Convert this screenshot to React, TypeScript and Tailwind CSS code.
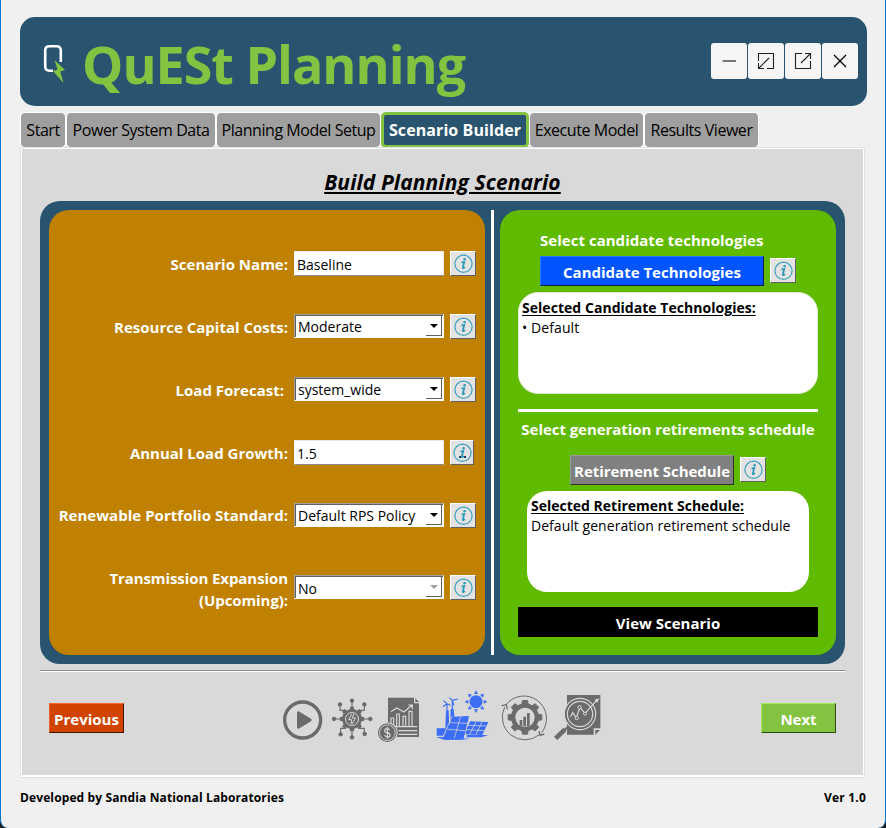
import type { ReactNode } from "react";

function gearPath(cx: number, cy: number, outer: number, inner: number, teeth: number) {
  const pts: string[] = [];
  const step = (Math.PI * 2) / teeth;
  for (let i = 0; i < teeth; i++) {
    const a = i * step - Math.PI / 2;
    const corners: [number, number][] = [
      [inner, -0.29],
      [outer, -0.19],
      [outer, 0.19],
      [inner, 0.29],
    ];
    corners.forEach(([r, o]) => {
      pts.push(`${(cx + r * Math.cos(a + o * step)).toFixed(1)} ${(cy + r * Math.sin(a + o * step)).toFixed(1)}`);
    });
  }
  return `M${pts.join("L")}Z`;
}

function InfoIcon() {
  return (
    <svg width="20" height="20" viewBox="0 0 20 20">
      <circle cx="10.500" cy="9.800" r="8.600" fill="none" stroke="#3aa0bd" strokeWidth="1.200" />
      <circle cx="11.600" cy="5.300" r="1.300" fill="#2f9ab8" />
      <path d="M8.500 8.400L11.200 8L9.800 13.600Q9.700 14.800 12 13.100" fill="none" stroke="#2f9ab8" strokeWidth="1.800" />
    </svg>
  );
}

function InfoButton({ narrow = false }: { narrow?: boolean }) {
  return (
    <button
      className={`relative flex h-[25px] shrink-0 items-center justify-center border border-t-white border-l-white border-r-[#606060] border-b-[#606060] bg-[#e3e3e3] ${narrow ? "w-6" : "w-[26px]"}`}
    >
      <InfoIcon />
      {narrow && <span className="absolute bottom-[6px] left-[8px] w-[7px] border-b-2 border-dotted border-[#1d3f63]" />}
    </button>
  );
}

function TextField({ value }: { value: string }) {
  return (
    <div className="flex h-[25px] w-[150px] items-center border border-t-[#e8e8e8] border-r-[#e8e8e8] border-l-white border-b-[#8a8a8a] bg-white pt-px pl-0.5 text-[14px] text-black">
      {value}
    </div>
  );
}

function SelectField({ value, disabled = false }: { value: string; disabled?: boolean }) {
  return (
    <div className="flex h-6 w-[150px] border border-t-[#a0a0a0] border-l-[#a0a0a0] border-r-white border-b-white bg-white">
      <div className="flex flex-1 items-center border-t border-l border-[#606060] pr-px pl-0.5 text-[14px] text-black">
        <span className={`flex-1 whitespace-nowrap ${disabled ? "pt-0.5" : ""}`}>{value}</span>
        <span className="mt-auto mb-px flex h-[20px] w-4 items-center justify-center border-r border-b border-[#606060] pt-px">
          <svg width="8" height="4" viewBox="0 0 8 4">
            <path d="M0 0H8L4 4Z" fill={disabled ? "#a0a0a0" : "#000"} />
          </svg>
        </span>
      </div>
    </div>
  );
}

function FormRow({ label, children, narrow }: { label: ReactNode; children: ReactNode; narrow?: boolean }) {
  return (
    <div className="flex h-[25px] items-center">
      <div className="flex w-[239px] justify-end pt-px text-right text-[15px] leading-[22px] font-bold text-white">{label}</div>
      <div className="ml-1.5 flex w-[156px] self-start">{children}</div>
      <InfoButton narrow={narrow} />
    </div>
  );
}

function Tab({ children, active = false, width }: { children: ReactNode; active?: boolean; width: string }) {
  return active ? (
    <div className={`flex h-9 items-center justify-center rounded-[5px] border-[3px] border-[#82c341] bg-[#285470] text-[16px] font-bold tracking-[0.08px] text-white ${width}`}>
      {children}
    </div>
  ) : (
    <div className={`flex h-9 items-center justify-center rounded-[5px] border border-white bg-[#9f9f9f] text-[16px] tracking-[-0.45px] text-black ${width}`}>
      {children}
    </div>
  );
}

function WindowButton({ children }: { children: ReactNode }) {
  return (
    <button className="flex size-9 items-center justify-center rounded-[3px] bg-[#f5f5f5]">
      <svg width="18" height="18" viewBox="0 0 18 18" fill="none" stroke="#222" strokeWidth="1.1">
        {children}
      </svg>
    </button>
  );
}

function PlayIcon() {
  return (
    <svg width="42" height="65" viewBox="36 0 126 195">
      <circle cx="98" cy="105" r="54" fill="none" stroke="#6b6b6b" strokeWidth="10" />
      <path d="M85 83L121 105L85 127Z" fill="#6b6b6b" stroke="#6b6b6b" strokeWidth="8" strokeLinejoin="round" />
    </svg>
  );
}

function NetworkIcon() {
  return (
    <svg className="ml-1.5" width="44" height="65" viewBox="180 0 132 195">
      <g stroke="#6b6b6b" strokeWidth="3.5" fill="none">
        <path d="M246 48V155M194 102H300M210 58V76H228M283 58V76H264M212 148V130H228M283 148V130H264" />
      </g>
      <g fill="#6b6b6b">
        {[[246, 47], [210, 58], [283, 58], [192, 102], [301, 102], [212, 148], [284, 147], [246, 157]].map(([x, y]) => (
          <circle key={`${x}-${y}`} cx={x} cy={y} r="6.5" />
        ))}
        <path d={gearPath(246, 102, 37, 30, 8)} />
      </g>
      <circle cx="246" cy="102" r="19.5" fill="none" stroke="#d9d9d9" strokeWidth="3" />
      <path d="M245 87L236 104H245L243 117M252 86L247 99H257L246 117" fill="none" stroke="#d9d9d9" strokeWidth="3" />
    </svg>
  );
}

function ReportIcon() {
  return (
    <svg className="ml-0.5" width="46" height="65" viewBox="318 0 138 195">
      <path d="M354 38H432V55H447V156H354Z" fill="#6b6b6b" />
      <path d="M436 40L447 51H436Z" fill="#6b6b6b" />
      <g fill="none" stroke="#d9d9d9" strokeWidth="3.5">
        <path d="M363 80L380 69L402 81L426 60M415 60H427V72" />
        <path d="M363 124V99H371V124M380 124V87H388V124M399 124V94H407V124M417 124V79H426V124M360 125H442M386 137H442M386 148H442" />
      </g>
      <circle cx="352" cy="143" r="31" fill="#d9d9d9" />
      <circle cx="352" cy="143" r="26" fill="#6b6b6b" stroke="#6b6b6b" strokeWidth="4" />
      <circle cx="352" cy="143" r="23.5" fill="none" stroke="#d9d9d9" strokeWidth="2.5" />
      <path d="M359 136Q357 131 351 131Q344 131 344 137Q344 142 352 143Q360 145 360 150Q360 156 352 156Q345 156 344 150M352 126V161" fill="none" stroke="#d9d9d9" strokeWidth="3.5" />
    </svg>
  );
}

function SolarIcon() {
  return (
    <svg className="ml-3" width="56" height="65" viewBox="27 0 168 195">
      <g fill="#3c6ef5">
        <circle cx="153" cy="50" r="19.5" />
        {[0, 45, 90, 135, 180, 225, 270, 315].map((a) => (
          <path key={a} d="M147 27L153 16L159 27Z" transform={`rotate(${a} 153 50)`} />
        ))}
        <path d="M63 76H71L73 129H61ZM77 72H86L88 98L76 118Z" />
        <path d="M35 130H68L57 152H35Z" />
        <path d="M33 156L70 155L132 161L115 164L60 165Q45 160 33 156ZM125 150H190L170 157H125Z" />
        <path d="M83 95L133 93L116 162L55 158Z" />
        <path d="M136 109L190 111L172 150L115 148Z" />
      </g>
      <g fill="none" stroke="#3c6ef5" strokeWidth="3.5">
        <path d="M66 77V56M82 73V46M66 56L55 47M66 56L54 65M66 56L76 61M82 46L73 38M82 46L87 61M82 46L99 42" />
      </g>
      <g fill="none" stroke="#d9d9d9" strokeWidth="2.2">
        <path d="M76 113L126 115M68 133L121 137M107 94L88 159M153 110L134 148M171 111L153 149M129 121L183 123M123 134L177 137M134 91L117 163M82 93L53 157" />
      </g>
    </svg>
  );
}

function ProcessIcon() {
  return (
    <svg className="ml-2.5" width="50" height="65" viewBox="225 0 150 195">
      <g fill="none" stroke="#6b6b6b" strokeWidth="3">
        <path d="M243 59A68 68 0 0 1 350 143M343 149A68 68 0 0 1 239 66" />
        <path d="M230 62L244 59L247 73M342 138L345 151L358 147" strokeWidth="4" />
      </g>
      <path d={gearPath(300, 97, 51, 41, 8)} fill="#6b6b6b" stroke="#6b6b6b" strokeWidth="3" strokeLinejoin="round" />
      <circle cx="300" cy="97" r="29" fill="#d9d9d9" />
      <path d="M284 105H292V122H284ZM295 95H303V124H295ZM306 84H314V121Q311 124 306 124Z" fill="#6b6b6b" />
    </svg>
  );
}

function AnalysisIcon() {
  return (
    <svg className="ml-[3px]" width="50" height="65" viewBox="384 0 150 195">
      <path d="M426 30H526V130H506V149H426Z" fill="#6b6b6b" />
      <path d="M511 135H525L511 149Z" fill="#6b6b6b" />
      <circle cx="465" cy="87" r="47" fill="#6b6b6b" stroke="#d9d9d9" strokeWidth="3.5" />
      <circle cx="465" cy="87" r="38" fill="none" stroke="#d9d9d9" strokeWidth="3.5" />
      <path d="M437 95L443 83L454 98L465 67L480 85L517 44" fill="none" stroke="#d9d9d9" strokeWidth="3.5" />
      <path d="M508 44L523 40L517 53Z" fill="#d9d9d9" />
      <g fill="#6b6b6b" stroke="#d9d9d9" strokeWidth="3">
        <circle cx="455" cy="99" r="5" />
        <circle cx="464" cy="67" r="5" />
        <circle cx="480" cy="86" r="4.5" />
      </g>
      <path d="M391 162L421 132" stroke="#d9d9d9" strokeWidth="19" />
      <path d="M392 160L420 133" stroke="#6b6b6b" strokeWidth="14" />
      <path d="M418 136L431 123" stroke="#6b6b6b" strokeWidth="6" />
    </svg>
  );
}

export default function App() {
  return (
    <div className="h-[828px] w-[886px] overflow-hidden bg-[#202020] font-['Open_Sans',sans-serif]">
      <div className="flex h-full flex-col rounded-b-[8px] border-x border-[#0078d4] bg-[#f0f0f0] pt-[17px] pr-[18px] pl-[19px]">
        <header className="flex h-[89px] shrink-0 items-center rounded-[15px] bg-[#285470] pr-[9px] pl-[23px]">
          <svg className="mt-[5px]" width="24" height="42" viewBox="0 0 24 42" fill="none">
            <path d="M10 27.700H6.500Q2.200 27.700 2.200 23.500V7.500Q2.200 3.200 6.500 3.200H13.500Q17.800 3.200 17.800 7.500V19" stroke="#fff" strokeWidth="2.600" />
            <path d="M11.500 17L22 27L17.300 28.500L20.500 40L10 28L14.500 26.500Z" fill="#82c341" />
          </svg>
          <h1 className="ml-[15px] flex-1 pt-[5px] text-[52px] leading-[70px] font-bold tracking-[-1px] whitespace-nowrap text-[#82c341]">QuESt Planning</h1>
          <div className="mb-px flex gap-px">
            <WindowButton>
              <path d="M2.500 9H16" stroke="#777" strokeWidth="2" />
            </WindowButton>
            <WindowButton>
              <path d="M1.500 9V1.500H16.500V16.500H10M7 16.500H1.500V11M1.500 16.500L12 6" />
            </WindowButton>
            <WindowButton>
              <path d="M16.500 9V16.500H1.500V1.500H8M11 1.500H16.500V7M16.500 1.500L7 11" />
            </WindowButton>
            <WindowButton>
              <path d="M3 3L15 15M15 3L3 15" stroke="#000" strokeWidth="1.300" />
            </WindowButton>
          </div>
        </header>

        <nav className="mt-1.5 flex h-9 shrink-0">
          <Tab width="w-[46px]">Start</Tab>
          <Tab width="w-[150px]">Power System Data</Tab>
          <Tab width="w-[165px]">Planning Model Setup</Tab>
          <Tab active width="w-[148px]">Scenario Builder</Tab>
          <Tab width="w-[115px]">Execute Model</Tab>
          <Tab width="w-[115px]">Results Viewer</Tab>
        </nav>

        <main className="-mt-px h-[631px] w-[845px] shrink-0 border border-[#e3e3e3]">
          <div className="flex h-full flex-col border border-b-2 border-white bg-[#d9d9d9] pr-[18px] pl-[18px]">
            <h2 className="mt-[20px] text-center text-[21px] leading-[27px] font-bold tracking-[0.1px] text-black italic underline decoration-[2px] underline-offset-[2px]">
              Build Planning Scenario
            </h2>
            <section className="mt-[5px] flex h-[463px] shrink-0 rounded-[20px] bg-[#285470] p-[9px]">
              <div className="w-[436px] rounded-[20px] bg-[#c08000] pt-[41px]">
                <div className="flex flex-col gap-[38px]">
                  <FormRow label="Scenario Name:">
                    <TextField value="Baseline" />
                  </FormRow>
                  <FormRow label="Resource Capital Costs:">
                    <SelectField value="Moderate" />
                  </FormRow>
                  <FormRow label={<span className="pr-1">Load Forecast:</span>}>
                    <SelectField value="system_wide" />
                  </FormRow>
                  <FormRow label="Annual Load Growth:" narrow>
                    <TextField value="1.5" />
                  </FormRow>
                  <FormRow label={<span className="-mt-0.5 tracking-[0.03px]">Renewable Portfolio Standard:</span>}>
                    <SelectField value="Default RPS Policy" />
                  </FormRow>
                </div>
                <div className="mt-[47px]">
                  <FormRow
                    label={
                      <span className="pt-px tracking-[-0.08px]">
                        Transmission Expansion
                        <br />
                        (Upcoming):
                      </span>
                    }
                  >
                    <SelectField value="No" disabled />
                  </FormRow>
                </div>
              </div>
              <div className="ml-1.5 w-[3px] bg-white" />
              <div className="ml-1.5 flex w-[336px] flex-col items-center rounded-[20px] bg-[#5fba00] pt-[19px] text-[15px] font-bold text-white">
                <div className="h-[27px] w-[300px] pl-[22px] leading-[22px] tracking-[0.03px]">Select candidate technologies</div>
                <div className="flex h-[30px] w-[300px] pl-[22px]">
                  <button className="mr-1.5 h-[30px] w-[224px] border border-t-[#2c73ff] border-l-[#2c73ff] border-r-[#001a50] border-b-[#001a50] bg-[#0055ff] pt-[3px]">
                    Candidate Technologies
                  </button>
                  <div className="mt-0.5">
                    <InfoButton />
                  </div>
                </div>
                <div className="mt-1.5 h-[102px] w-[300px] rounded-[20px] border border-[#dfe8d5] bg-white px-[3px] pt-[5px] text-[14px] leading-[20px] text-black">
                  <div className="tracking-[0.04px] underline underline-offset-2">Selected Candidate Technologies:</div>
                  <div className="font-normal tracking-[0.08px]">• Default</div>
                </div>
                <div className="mt-[15px] h-[3px] w-[300px] bg-white" />
                <div className="mt-[6px] h-[22px] leading-[22px] tracking-[-0.05px] whitespace-nowrap">Select generation retirements schedule</div>
                <div className="mt-[15px] flex h-[30px]">
                  <button className="mr-1.5 h-[30px] w-[164px] border border-t-[#9a9a9a] border-l-[#9a9a9a] border-r-[#303030] border-b-[#303030] bg-[#808080] pt-[3px] tracking-[-0.05px] whitespace-nowrap">
                    Retirement Schedule
                  </button>
                  <div className="mt-0.5">
                    <InfoButton />
                  </div>
                </div>
                <div className="mt-1.5 h-[101px] w-[282px] rounded-[20px] bg-white px-1 pt-[5px] text-[14px] leading-[20px] text-black">
                  <div className="underline underline-offset-2">Selected Retirement Schedule:</div>
                  <div className="font-normal tracking-[0.04px] whitespace-nowrap">Default generation retirement schedule</div>
                </div>
                <button className="mt-[15px] h-[30px] w-[300px] bg-black pt-[3px]">View Scenario</button>
              </div>
            </section>
            <div className="mt-1.5 h-0.5 shrink-0 border-t border-b border-t-[#8c8c8c] border-b-white" />
            <footer className="mt-[13px] flex h-[65px] items-center pr-[9px] pl-[9px] text-[15px] font-bold text-white">
              <button className="h-[30px] w-[75px] border border-t-[#ff6a2a] border-l-[#e86020] border-r-[#401500] border-b-[#401500] bg-[#d04400] pt-[3px]">
                Previous
              </button>
              <div className="ml-[158px] flex">
                <PlayIcon />
                <NetworkIcon />
                <ReportIcon />
                <SolarIcon />
                <ProcessIcon />
                <AnalysisIcon />
              </div>
              <button className="ml-auto h-[30px] w-[75px] border border-t-[#a5ec5c] border-l-[#a5ec5c] border-r-[#2c4a10] border-b-[#2c4a10] bg-[#82c341] pt-[3px]">
                Next
              </button>
            </footer>
          </div>
        </main>

        <div className="mt-[12px] flex justify-between pr-px text-[12px] leading-[16px] font-bold text-black">
          <span className="tracking-[0.12px]">Developed by Sandia National Laboratories</span>
          <span className="tracking-[0.2px]">Ver 1.0</span>
        </div>
      </div>
    </div>
  );
}
